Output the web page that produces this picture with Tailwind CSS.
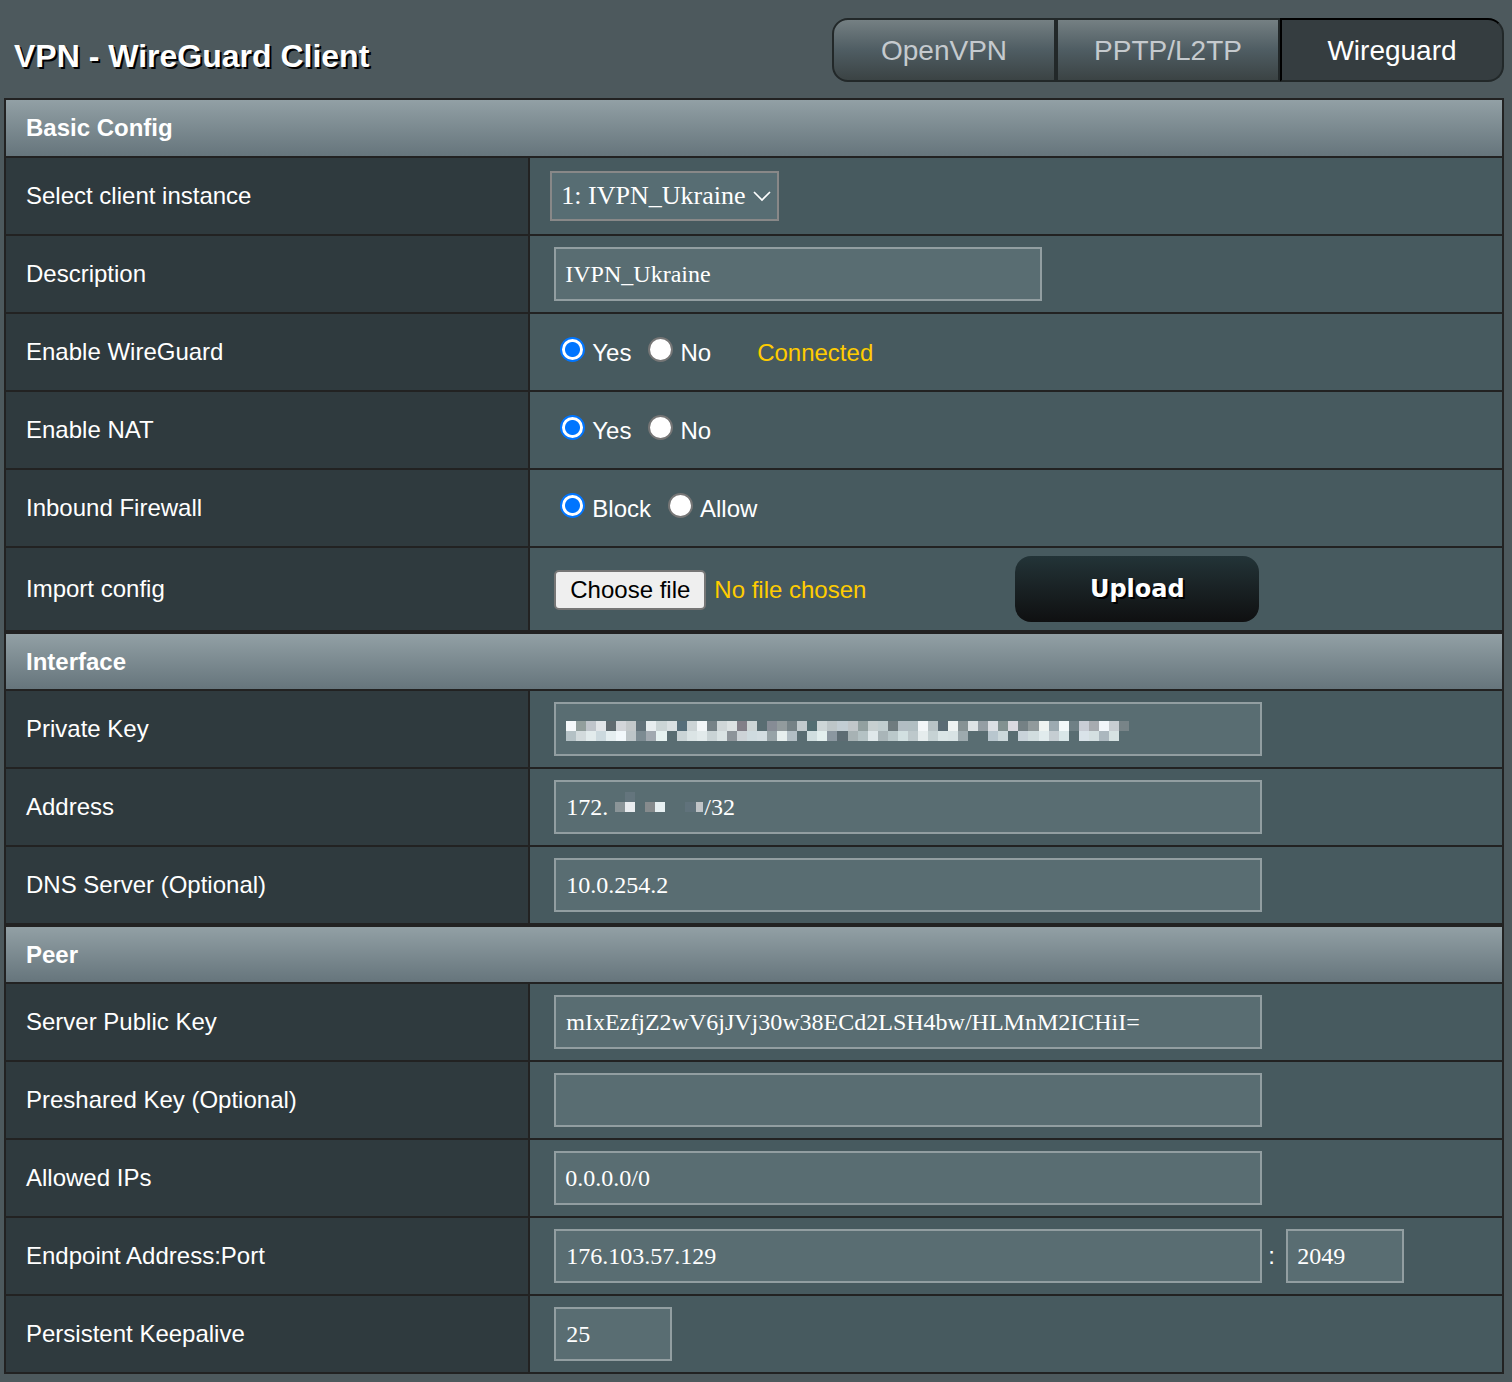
<!DOCTYPE html>
<html lang="en">
<head>
<meta charset="utf-8">
<meta name="viewport" content="width=device-width, initial-scale=1">
<title>VPN - WireGuard Client</title>
<script src="https://cdn.jsdelivr.net/npm/@tailwindcss/browser@4"></script>
</head>
<body class="min-h-screen bg-[#4d595d] pr-2 pb-2 pl-1 font-['Liberation_Sans',Arial,sans-serif] text-2xl text-white">
<header class="flex items-start justify-between pt-[18px] pb-4 pl-[10px]">
  <h1 class="pt-[14px] text-[32px] leading-12 font-bold [text-shadow:2px_2px_0_#000]">VPN - WireGuard Client</h1>
  <nav class="flex h-16 text-[28px]">
    <a href="#openvpn" class="flex w-56 items-center justify-center rounded-l-2xl border-2 border-[#222829] bg-linear-to-b from-[#758083] via-[#4f5d63] to-[#3b4344] pt-px text-[#c5cace]">OpenVPN</a>
    <a href="#pptp" class="flex w-56 items-center justify-center border-2 border-[#222829] bg-linear-to-b from-[#758083] via-[#4f5d63] to-[#3b4344] pt-px text-[#c5cace]">PPTP/L2TP</a>
    <a href="#wireguard" aria-current="page" class="flex w-56 items-center justify-center rounded-r-2xl border-2 border-t-black border-r-[#222829] border-b-[#222829] border-l-black bg-[#353d40] pt-px text-white">Wireguard</a>
  </nav>
</header>
<main>
  <form>
  <table class="w-full table-fixed border-collapse border-2 border-[#222]">
    <colgroup><col class="w-[35%]"><col></colgroup>
    <thead><tr class="h-[58px]"><th colspan="2" class="border-2 border-[#222] bg-linear-to-b from-[#92a0a5] to-[#66757c] px-5 text-left font-bold">Basic Config</th></tr></thead>
    <tbody>
      <tr class="h-[78px]">
        <th class="border-2 border-[#222] bg-[#2f3a3e] px-5 text-left font-normal"><label for="unit">Select client instance</label></th>
        <td class="border-2 border-[#222] bg-[#475a5f] px-5">
          <div class="relative w-[229px]">
            <select id="unit" class="block h-[50px] w-full appearance-none border-2 border-[#888] bg-[#576d73] pl-[9px] font-['Liberation_Serif','Times_New_Roman',serif] text-[26px] leading-8"><option>1: IVPN_Ukraine</option></select>
            <svg class="pointer-events-none absolute top-[19px] right-2 h-3 w-[18px]" viewBox="0 0 18 12" fill="none" stroke="#fff" stroke-width="1.7"><path d="M1 2l8 8 8-8"/></svg>
          </div>
        </td>
      </tr>
      <tr class="h-[78px]">
        <th class="border-2 border-[#222] bg-[#2f3a3e] px-5 text-left font-normal"><label for="desc">Description</label></th>
        <td class="border-2 border-[#222] bg-[#475a5f] px-6"><input id="desc" type="text" value="IVPN_Ukraine" class="block h-[54px] w-[488px] border-2 border-[#929ea1] bg-[#596d72] px-[9px] font-['Liberation_Serif','Times_New_Roman',serif]"></td>
      </tr>
      <tr class="h-[78px]">
        <th class="border-2 border-[#222] bg-[#2f3a3e] px-5 text-left font-normal">Enable WireGuard</th>
        <td class="border-2 border-[#222] bg-[#475a5f] px-[30px]">
          <div class="flex items-center pt-[2px]">
            <label class="flex gap-[7px]"><input type="radio" name="enable" checked class="size-[25px] appearance-none rounded-full border-2 border-[#767676] bg-white checked:border-[#0075ff] checked:bg-[radial-gradient(circle,#0075ff_7px,#fff_8px)]"><span>Yes</span></label>
            <label class="ml-[17px] flex gap-[7px]"><input type="radio" name="enable" class="size-[25px] appearance-none rounded-full border-2 border-[#767676] bg-white checked:border-[#0075ff] checked:bg-[radial-gradient(circle,#0075ff_7px,#fff_8px)]"><span>No</span></label>
            <span class="ml-[46px] text-[#fc0]">Connected</span>
          </div>
        </td>
      </tr>
      <tr class="h-[78px]">
        <th class="border-2 border-[#222] bg-[#2f3a3e] px-5 text-left font-normal">Enable NAT</th>
        <td class="border-2 border-[#222] bg-[#475a5f] px-[30px]">
          <div class="flex items-center pt-[2px]">
            <label class="flex gap-[7px]"><input type="radio" name="nat" checked class="size-[25px] appearance-none rounded-full border-2 border-[#767676] bg-white checked:border-[#0075ff] checked:bg-[radial-gradient(circle,#0075ff_7px,#fff_8px)]"><span>Yes</span></label>
            <label class="ml-[17px] flex gap-[7px]"><input type="radio" name="nat" class="size-[25px] appearance-none rounded-full border-2 border-[#767676] bg-white checked:border-[#0075ff] checked:bg-[radial-gradient(circle,#0075ff_7px,#fff_8px)]"><span>No</span></label>
          </div>
        </td>
      </tr>
      <tr class="h-[78px]">
        <th class="border-2 border-[#222] bg-[#2f3a3e] px-5 text-left font-normal">Inbound Firewall</th>
        <td class="border-2 border-[#222] bg-[#475a5f] px-[30px]">
          <div class="flex items-center pt-[2px]">
            <label class="flex gap-[7px]"><input type="radio" name="fw" checked class="size-[25px] appearance-none rounded-full border-2 border-[#767676] bg-white checked:border-[#0075ff] checked:bg-[radial-gradient(circle,#0075ff_7px,#fff_8px)]"><span>Block</span></label>
            <label class="ml-[17px] flex gap-[7px]"><input type="radio" name="fw" class="size-[25px] appearance-none rounded-full border-2 border-[#767676] bg-white checked:border-[#0075ff] checked:bg-[radial-gradient(circle,#0075ff_7px,#fff_8px)]"><span>Allow</span></label>
          </div>
        </td>
      </tr>
      <tr class="h-[84px]">
        <th class="border-2 border-[#222] bg-[#2f3a3e] px-5 text-left font-normal">Import config</th>
        <td class="border-2 border-[#222] bg-[#475a5f] px-6">
          <div class="flex items-center">
            <div class="relative flex w-[461px] items-center gap-2 pt-[2px]">
              <input id="file" type="file" class="sr-only">
              <label for="file" class="flex h-10 w-[152px] items-center justify-center rounded-[5px] border-2 border-[#767676] bg-[#efefef] text-black">Choose file</label>
              <span class="text-[#fc0]">No file chosen</span>
            </div>
            <button type="button" class="h-[66px] w-[244px] rounded-2xl bg-linear-to-b from-[#233438] to-[#0f1011] font-['DejaVu_Sans',Verdana,sans-serif] font-bold [text-shadow:2px_2px_0_#000]">Upload</button>
          </div>
        </td>
      </tr>
    </tbody>
  </table>

  <table class="w-full table-fixed border-collapse border-2 border-[#222]">
    <colgroup><col class="w-[35%]"><col></colgroup>
    <thead><tr class="h-[57px]"><th colspan="2" class="border-2 border-[#222] bg-linear-to-b from-[#92a0a5] to-[#66757c] px-5 text-left font-bold">Interface</th></tr></thead>
    <tbody>
      <tr class="h-[78px]">
        <th class="border-2 border-[#222] bg-[#2f3a3e] px-5 text-left font-normal"><label for="priv">Private Key</label></th>
        <td class="border-2 border-[#222] bg-[#475a5f] px-6">
          <div class="relative w-[708px]">
            <input id="priv" type="text" class="block h-[54px] w-full border-2 border-[#929ea1] bg-[#596d72] px-[10px] font-['Liberation_Serif','Times_New_Roman',serif]">
            <svg id="mask" class="pointer-events-none absolute top-[19px] left-3 h-5 w-[563px]" viewBox="0 0 56 2" preserveAspectRatio="none" shape-rendering="crispEdges" aria-hidden="true"></svg>
          </div>
        </td>
      </tr>
      <tr class="h-[78px]">
        <th class="border-2 border-[#222] bg-[#2f3a3e] px-5 text-left font-normal"><label for="addr">Address</label></th>
        <td class="border-2 border-[#222] bg-[#475a5f] px-6">
          <div class="relative w-[708px]">
            <input id="addr" type="text" value="172.                /32" class="block h-[54px] w-full border-2 border-[#929ea1] bg-[#596d72] px-[10px] font-['Liberation_Serif','Times_New_Roman',serif]">
            <svg class="pointer-events-none absolute top-3 left-[61px] h-5 w-[88px]" viewBox="0 0 88 20" shape-rendering="crispEdges" aria-hidden="true">
              <path fill="#64757d" d="M10 0h10v10H10z"/><path fill="#8b9598" d="M0 10h10v10H0z"/><path fill="#e9ecef" d="M10 10h10v10H10z"/><path fill="#868b8d" d="M30 10h10v10H30z"/><path fill="#e7f0f2" d="M40 10h10v10H40z"/><path fill="#60727b" d="M70 10h11v10H70z"/><path fill="#c0c4c7" d="M81 10h7v10h-7z"/>
            </svg>
          </div>
        </td>
      </tr>
      <tr class="h-[78px]">
        <th class="border-2 border-[#222] bg-[#2f3a3e] px-5 text-left font-normal"><label for="dns">DNS Server (Optional)</label></th>
        <td class="border-2 border-[#222] bg-[#475a5f] px-6"><input id="dns" type="text" value="10.0.254.2" class="block h-[54px] w-[708px] border-2 border-[#929ea1] bg-[#596d72] px-[10px] font-['Liberation_Serif','Times_New_Roman',serif]"></td>
      </tr>
    </tbody>
  </table>

  <table class="w-full table-fixed border-collapse border-2 border-[#222]">
    <colgroup><col class="w-[35%]"><col></colgroup>
    <thead><tr class="h-[57px]"><th colspan="2" class="border-2 border-[#222] bg-linear-to-b from-[#92a0a5] to-[#66757c] px-5 text-left font-bold">Peer</th></tr></thead>
    <tbody>
      <tr class="h-[78px]">
        <th class="border-2 border-[#222] bg-[#2f3a3e] px-5 text-left font-normal"><label for="pub">Server Public Key</label></th>
        <td class="border-2 border-[#222] bg-[#475a5f] px-6"><input id="pub" type="text" value="mIxEzfjZ2wV6jJVj30w38ECd2LSH4bw/HLMnM2ICHiI=" class="block h-[54px] w-[708px] border-2 border-[#929ea1] bg-[#596d72] px-[10px] font-['Liberation_Serif','Times_New_Roman',serif]"></td>
      </tr>
      <tr class="h-[78px]">
        <th class="border-2 border-[#222] bg-[#2f3a3e] px-5 text-left font-normal"><label for="psk">Preshared Key (Optional)</label></th>
        <td class="border-2 border-[#222] bg-[#475a5f] px-6"><input id="psk" type="text" class="block h-[54px] w-[708px] border-2 border-[#929ea1] bg-[#596d72] px-[10px] font-['Liberation_Serif','Times_New_Roman',serif]"></td>
      </tr>
      <tr class="h-[78px]">
        <th class="border-2 border-[#222] bg-[#2f3a3e] px-5 text-left font-normal"><label for="ips">Allowed IPs</label></th>
        <td class="border-2 border-[#222] bg-[#475a5f] px-6"><input id="ips" type="text" value="0.0.0.0/0" class="block h-[54px] w-[708px] border-2 border-[#929ea1] bg-[#596d72] px-[9px] font-['Liberation_Serif','Times_New_Roman',serif]"></td>
      </tr>
      <tr class="h-[78px]">
        <th class="border-2 border-[#222] bg-[#2f3a3e] px-5 text-left font-normal"><label for="ep">Endpoint Address:Port</label></th>
        <td class="border-2 border-[#222] bg-[#475a5f] px-6">
          <div class="flex items-center">
            <input id="ep" type="text" value="176.103.57.129" class="block h-[54px] w-[708px] border-2 border-[#929ea1] bg-[#596d72] px-[10px] font-['Liberation_Serif','Times_New_Roman',serif]">
            <span class="w-6 pl-[6px]">:</span>
            <input type="text" aria-label="Port" value="2049" class="block h-[54px] w-[118px] border-2 border-[#929ea1] bg-[#596d72] px-[9px] font-['Liberation_Serif','Times_New_Roman',serif]">
          </div>
        </td>
      </tr>
      <tr class="h-[78px]">
        <th class="border-2 border-[#222] bg-[#2f3a3e] px-5 text-left font-normal"><label for="alive">Persistent Keepalive</label></th>
        <td class="border-2 border-[#222] bg-[#475a5f] px-6"><input id="alive" type="text" value="25" class="block h-[54px] w-[118px] border-2 border-[#929ea1] bg-[#596d72] px-[10px] font-['Liberation_Serif','Times_New_Roman',serif]"></td>
      </tr>
    </tbody>
  </table>
  </form>
</main>
<script>
// Mosaic that hides the private key: two rows of tiles, "-" leaves a tile empty.
const tiles = [
  'f4f8fa 929f9d bfc5cb e1e5e8 606b70 d2d5d9 c3c8ca 62727a e7edef cbd5d6 d9e0e2 566e7a ccd4d6 f2f6f8 768287 cfd6d8 dce2e3 827f88 cdd5d6 - 868c95 929b9d 758286 c2cbce 536e72 cdd6d7 bdc6c8 c2cdd3 c0c6c9 92a0a0 c6cfd0 c0cdcf 6f7b7f b2bdc3 b1bec2 f2f6f8 b8c3c6 5a6b74 eef3f2 869294 dde3e5 949ea4 dbdfe4 829191 dad9e0 758185 919a9c eef3f1 9caab1 f2f9fa 6f8085 c8cdd5 a7abb0 f1f6fa c7cdd1 788488',
  'b4c1c5 d2dadc e2ebec ccd9de e5eef0 f2f8fb bdc5c8 7c8b92 a1a9b0 e6f2f1 - cad4d6 dbe4e5 e2eaeb c9d3d5 dae3e4 8d949a cdd3d7 cfdbdf d3dde1 97a3a7 e7efee b2bec4 - d0dedf e3efee 8b97a0 5d6c73 a7b2b4 b4c2c4 dfe8ea a9b5b8 bac8ca d2e0e1 bdc8cb e5eced c6d2d4 dae5e6 d8e3e4 9daaae - - b8c6ce ccd8db - c9d3da d1dddf e1ebed c5cdd2 d8e6e8 - d9e3e9 d4dfe1 abb7be d6e2e2 -'
];
document.getElementById('mask').innerHTML = tiles.map((row, y) => row.split(' ').map((c, x) =>
  c === '-' ? '' : `<rect x="${x}" y="${y}" width="1" height="1" fill="#${c}"/>`).join('')).join('');
</script>
</body>
</html>
